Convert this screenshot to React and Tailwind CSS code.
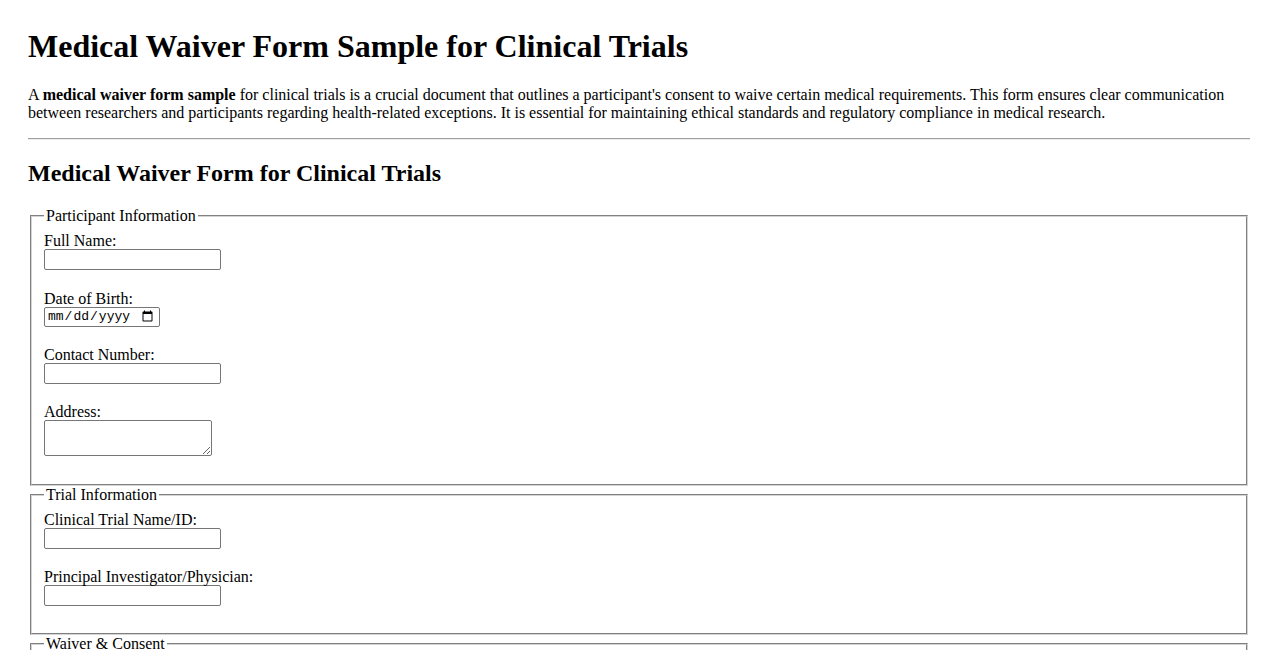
import React from "react";

function Field({ label, children, mb = "mb-[18px]", mt = "" }) {
  return (
    <div className={mb + " " + mt}>
      <label className="block h-[18px] pt-[1px] leading-[18px]">{label}</label>
      <div className="leading-none">{children}</div>
    </div>
  );
}

const inputCls =
  "block w-[177px] h-[21px] px-[2px] py-[1px] border border-[#767676] rounded-[2px] bg-white text-[13.33px] font-['Liberation_Sans',Arial,sans-serif]";

function Fieldset({ legend, children, pb = "pb-[10px]" }) {
  return (
    <fieldset className={"mx-[2px] pt-[5.6px] px-[12px] [border:2px_groove_#d4d4d4] min-w-0 " + pb}>
      <legend className="px-[2px] leading-[normal]">{legend}</legend>
      {children}
    </fieldset>
  );
}

export default function App() {
  return (
    <div className="min-h-screen bg-white text-black font-['Liberation_Serif','Times_New_Roman',serif] text-[16px] leading-[normal] px-[28px] pt-[28px] pb-[28px]">
      <h1 className="text-[32px] font-bold leading-[normal] mb-[21.44px]">
        Medical Waiver Form Sample for Clinical Trials
      </h1>
      <p className="my-4 leading-[normal]">
        A <strong className="font-bold">medical waiver form sample</strong> for clinical trials is a crucial
        document that outlines a participant's consent to waive certain medical requirements. This form ensures
        clear communication between researchers and participants regarding health-related exceptions. It is
        essential for maintaining ethical standards and regulatory compliance in medical research.
      </p>
      <hr className="my-2 h-0 border-t border-b border-t-[#a0a0a0] border-b-[#ececec]" />
      <h2 className="text-[24px] font-bold leading-[normal] my-[19.92px]">Medical Waiver Form for Clinical Trials</h2>
      <form>
        <Fieldset legend="Participant Information">
          <Field label="Full Name:" mb="mb-[19px]">
            <input type="text" className={inputCls} />
          </Field>
          <Field label="Date of Birth:">
            <input
              type="date"
              className="block w-[116px] h-[20px] pl-[2px] pr-[3px] border border-[#767676] rounded-[2px] bg-white text-[13px] font-['Liberation_Mono',monospace]"
            />
          </Field>
          <Field label="Contact Number:">
            <input type="tel" className={inputCls} />
          </Field>
          <Field label="Address:">
            <textarea className="block w-[168px] h-[36px] px-[2px] py-[1px] border border-[#767676] rounded-[2px] bg-white text-[13px] font-['Liberation_Mono',monospace] resize" />
          </Field>
        </Fieldset>
        <Fieldset legend="Trial Information" pb="pb-[9px]">
          <Field label="Clinical Trial Name/ID:" mt="mt-[1px]">
            <input type="text" className={inputCls} />
          </Field>
          <Field label="Principal Investigator/Physician:">
            <input type="text" className={inputCls} />
          </Field>
        </Fieldset>
        <Fieldset legend="Waiver & Consent">
          <Field label="I understand the risks involved in participating in this clinical trial:">
            <input type="checkbox" />
          </Field>
          <div className="h-[200px]" />
        </Fieldset>
      </form>
    </div>
  );
}
